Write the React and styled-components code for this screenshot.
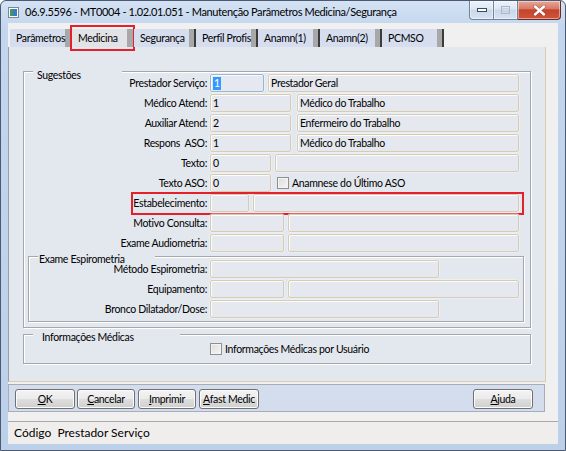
import React from "react";
import styled, { createGlobalStyle } from "styled-components";

const GlobalStyle = createGlobalStyle`
  html, body {
    margin: 0;
    padding: 0;
    background: #ffffff;
  }
  body {
    font-family: Lato, "Liberation Sans", sans-serif;
    color: #000;
  }
`;

// small dialog text, narrow like the old MS Sans Serif
const smallText = `
  font-size: 10.5px;
  letter-spacing: -0.32px;
`;

const Window = styled.div`
  box-sizing: border-box;
  width: 566px;
  height: 451px;
  display: flex;
  flex-direction: column;
  border: 1px solid #4a5a72;
  border-radius: 6px 6px 0 0;
  background: linear-gradient(180deg, #d4e2f3 0%, #c3d6ee 6%, #bcd0ea 100%);
  overflow: hidden;
`;

const TitleBar = styled.div`
  flex: none;
  height: 22px;
  display: flex;
  align-items: flex-start;
  padding-left: 7px;
`;

const AppIcon = styled.svg`
  margin-top: 6px;
  flex: none;
`;

const Title = styled.div`
  margin-left: 6px;
  font-size: 11px;
  letter-spacing: -0.38px;
  line-height: 22px;
  white-space: nowrap;
`;

const Controls = styled.div`
  display: flex;
  margin-left: auto;
  margin-right: 4px;
`;

const CaptionButton = styled.div`
  box-sizing: border-box;
  width: ${(p) => p.$w}px;
  height: 19px;
  display: flex;
  align-items: center;
  justify-content: center;
  border: 1px solid ${(p) => (p.$close ? "#6b2c22" : "#70829c")};
  border-top: none;
  border-left-width: ${(p) => (p.$first ? 1 : 0)}px;
  border-radius: ${(p) => p.$radius};
  background: ${(p) =>
    p.$close
      ? "linear-gradient(180deg, #e8a89a 0%, #d87a66 42%, #c4432c 50%, #cf553b 100%)"
      : "linear-gradient(180deg, #eef3fa 0%, #dde6f2 45%, #c9d7ea 50%, #d8e3f1 100%)"};
  box-shadow: inset 0 0 0 1px rgba(255, 255, 255, 0.45);
`;

const Client = styled.div`
  flex: 1;
  min-height: 0;
  margin: 0 7px 6px;
  background: #f0f0f0;
  display: flex;
  flex-direction: column;
`;

const TabStrip = styled.div`
  display: flex;
  padding: 6px 0 0 2px;
`;

const Tab = styled.div`
  position: relative;
  box-sizing: border-box;
  width: 62px;
  height: 18px;
  padding-left: 6px;
  ${smallText}
  line-height: 18px;
  white-space: nowrap;
  background: linear-gradient(
    90deg,
    ${(p) => (p.$active ? "#e2e3e6" : "#d5ddee")} calc(100% - 7px),
    #a8a8a8 calc(100% - 7px),
    #a8a8a8 calc(100% - 2px),
    ${(p) => (p.$active ? "#a8a8a8" : "#3c3c3c")} calc(100% - 2px)
  );
`;

const Marker = styled.span`
  position: absolute;
  box-sizing: border-box;
  border: 2px solid #e4202a;
  pointer-events: none;
`;

const TabMarker = styled(Marker)`
  top: -4px;
  bottom: -4px;
  left: -2px;
  right: -1px;
`;

const RowMarker = styled(Marker)`
  top: -2px;
  bottom: -3px;
  left: 107px;
  right: 6px;
`;

const Panel = styled.div`
  box-sizing: border-box;
  height: 335px;
  margin-right: 12px;
  padding: 24px 0 0 14px;
  background: #e3e7ee;
  border-left: 1px solid #9aa0a8;
  border-right: 1px solid #dacdad;
  border-bottom: 1px solid #dacdad;
`;

const Group = styled.div`
  position: relative;
  box-sizing: border-box;
  width: ${(p) => p.$w}px;
  border: 1px solid #a4a7ab;
  box-shadow: 1px 1px 0 #ffffff, inset 1px 1px 0 #ffffff;
  padding: ${(p) => p.$pad};
  margin: ${(p) => p.$margin || 0};
`;

const Legend = styled.span`
  position: absolute;
  top: ${(p) => p.$top}px;
  left: 9px;
  box-sizing: border-box;
  width: ${(p) => p.$w}px;
  padding-left: ${(p) => p.$indent}px;
  background: #e3e7ee;
  ${smallText}
  line-height: 13px;
  white-space: nowrap;
`;

const Row = styled.div`
  position: relative;
  display: flex;
  align-items: center;
  height: 18px;
  margin-bottom: 2px;
`;

const Label = styled.span`
  flex: none;
  width: ${(p) => p.$w}px;
  margin-right: 3px;
  text-align: right;
  ${smallText}
  white-space: pre;
`;

const Field = styled.div`
  flex: none;
  box-sizing: border-box;
  width: ${(p) => p.$w}px;
  height: 18px;
  margin-left: ${(p) => p.$gap || 0}px;
  padding-left: 2px;
  display: flex;
  align-items: center;
  ${smallText}
  white-space: nowrap;
  overflow: hidden;
  background: #e5e8ee;
  border: 1px solid ${(p) => (p.$focus ? "#9db4d2" : "#d5ccb3")};
  border-radius: 2px;
  box-shadow: inset 1px 1px 0 #fbfbfb, 0 0 0 0.5px rgba(255, 255, 255, 0.6);
`;

const Selected = styled.span`
  background: #3399ff;
  color: #ffffff;
  padding: 0 1px;
  line-height: 13px;
`;

const Check = styled.label`
  display: flex;
  align-items: center;
  margin-left: ${(p) => p.$gap || 0}px;
  ${smallText}
  white-space: nowrap;
`;

const Box = styled.span`
  box-sizing: border-box;
  width: 12px;
  height: 12px;
  margin-right: 3px;
  border: 1px solid #8e8f8f;
  background: linear-gradient(135deg, #dcdcdc 0%, #f6f6f6 100%);
  box-shadow: inset 0 0 0 1px #f4f4f4;
`;

const CheckRow = styled.div`
  display: flex;
  align-items: center;
  height: 28px;
  padding-left: 186px;
`;

const ButtonBar = styled.div`
  box-sizing: border-box;
  height: 28px;
  margin: 2px 13px 0 0;
  padding: 4px 11px 0 6px;
  display: flex;
  align-items: flex-start;
  background: #d4ddee;
  border: 1px solid #a6adb7;
`;

const Button = styled.button`
  box-sizing: border-box;
  width: ${(p) => p.$w}px;
  height: 20px;
  margin: 0 ${(p) => p.$space || 0}px 0 0;
  margin-left: ${(p) => (p.$push ? "auto" : "0")};
  padding: 0;
  font-family: inherit;
  ${smallText}
  color: #000;
  border: 1px solid #707070;
  border-radius: 3px;
  background: linear-gradient(180deg, #f3f3f3 0%, #ebebeb 48%, #dedede 52%, #cfcfcf 100%);
  box-shadow: inset 0 0 0 1px #fbfbfb;
  u {
    text-decoration: underline;
  }
`;

const Spacer = styled.div`
  flex: 1;
`;

const StatusBar = styled.div`
  height: 22px;
  padding-left: 6px;
  border-top: 1px solid #a9a9a9;
  background: #f0eeec;
  font-size: 12px;
  line-height: 22px;
  white-space: pre;
`;

const suggestions = [
  {
    label: "Prestador Serviço:",
    fields: [{ w: 54, value: "1", focus: true }, { w: 251, gap: 4, value: "Prestador Geral" }],
  },
  {
    label: "Médico Atend:",
    fields: [{ w: 81, value: "1" }, { w: 222, gap: 6, value: "Médico do Trabalho" }],
  },
  {
    label: "Auxiliar Atend:",
    fields: [{ w: 81, value: "2" }, { w: 222, gap: 6, value: "Enfermeiro do Trabalho" }],
  },
  {
    label: "Respons  ASO:",
    fields: [{ w: 81, value: "1" }, { w: 222, gap: 6, value: "Médico do Trabalho" }],
  },
  { label: "Texto:", fields: [{ w: 61, value: "0" }, { w: 244, gap: 4 }] },
  { label: "Texto ASO:", fields: [{ w: 61, value: "0" }], check: "Anamnese do Último ASO" },
  { label: "Estabelecimento:", fields: [{ w: 39 }, { w: 266, gap: 4 }], marked: true },
  { label: "Motivo Consulta:", fields: [{ w: 74 }, { w: 231, gap: 4 }] },
  { label: "Exame Audiometria:", fields: [{ w: 74 }, { w: 231, gap: 4 }] },
];

const spirometry = [
  { label: "Método Espirometria:", fields: [{ w: 229 }] },
  { label: "Equipamento:", fields: [{ w: 74 }, { w: 231, gap: 4 }] },
  { label: "Bronco Dilatador/Dose:", fields: [{ w: 229 }] },
];

const tabs = ["Parâmetros", "Medicina", "Segurança", "Perfil Profis", "Anamn(1)", "Anamn(2)", "PCMSO"];

const FormRow = ({ row, labelWidth }) => (
  <Row>
    <Label $w={labelWidth}>{row.label}</Label>
    {row.fields.map((f, i) => (
      <Field key={i} $w={f.w} $gap={f.gap} $focus={f.focus}>
        {f.focus ? <Selected>{f.value}</Selected> : f.value}
      </Field>
    ))}
    {row.check && (
      <Check $gap={6}>
        <Box />
        {row.check}
      </Check>
    )}
    {row.marked && <RowMarker />}
  </Row>
);

const Mnemonic = ({ text }) => (
  <>
    <u>{text[0]}</u>
    {text.slice(1)}
  </>
);

export default function App() {
  return (
    <>
      <GlobalStyle />
      <Window>
        <TitleBar>
          <AppIcon width="11" height="11" viewBox="0 0 11 11">
            <rect x="0.5" y="0.5" width="10" height="10" fill="#ffffff" stroke="#7b8796" />
            <rect x="2" y="2" width="3" height="7" fill="#3f9a58" />
            <rect x="5" y="2" width="4" height="7" fill="#3c78c8" />
          </AppIcon>
          <Title>06.9.5596 - MT0004 - 1.02.01.051 - Manutenção Parâmetros Medicina/Segurança</Title>
          <Controls>
            <CaptionButton $w={25} $first $radius="0 0 0 4px">
              <svg width="10" height="4" viewBox="0 0 10 4">
                <rect x="0.5" y="0.5" width="9" height="3" fill="#ffffff" stroke="#3b4a5f" />
              </svg>
            </CaptionButton>
            <CaptionButton $w={24} $radius="0">
              <svg width="9" height="8" viewBox="0 0 9 8">
                <rect x="0.5" y="0.5" width="8" height="7" fill="none" stroke="#a9b7c9" />
                <rect x="2" y="2.5" width="5" height="3" fill="none" stroke="#c6d1df" />
              </svg>
            </CaptionButton>
            <CaptionButton $w={43} $close $radius="0 0 4px 0">
              <svg width="13" height="11" viewBox="0 0 13 11">
                <path d="M2 1.5 L11 9.5 M11 1.5 L2 9.5" stroke="#5a1d14" strokeWidth="3.4" strokeLinecap="round" opacity="0.5" />
                <path d="M2 1.5 L11 9.5 M11 1.5 L2 9.5" stroke="#ffffff" strokeWidth="2.4" strokeLinecap="round" />
              </svg>
            </CaptionButton>
          </Controls>
        </TitleBar>

        <Client>
          <TabStrip>
            {tabs.map((t) => (
              <Tab key={t} $active={t === "Medicina"}>
                {t}
                {t === "Medicina" && <TabMarker />}
              </Tab>
            ))}
          </TabStrip>

          <Panel>
            <Group $w={508} $pad="2px 0 5px 0">
              <Legend $top={-3} $w={89} $indent={4}>
                Sugestões
              </Legend>
              {suggestions.map((r) => (
                <FormRow key={r.label} row={r} labelWidth={183} />
              ))}
              <Group $w={496} $pad="3px 0 1px 0" $margin="4px 0 0 4px">
                <Legend $top={-4} $w={117} $indent={1}>
                  Exame Espirometria
                </Legend>
                {spirometry.map((r) => (
                  <FormRow key={r.label} row={r} labelWidth={178} />
                ))}
              </Group>
            </Group>

            <Group $w={508} $pad="0" $margin="6px 0 0 0">
              <Legend $top={-4} $w={147} $indent={9}>
                Informações Médicas
              </Legend>
              <CheckRow>
                <Check>
                  <Box />
                  Informações Médicas por Usuário
                </Check>
              </CheckRow>
            </Group>
          </Panel>

          <ButtonBar>
            <Button $w={60} $space={2}>
              <Mnemonic text="OK" />
            </Button>
            <Button $w={58} $space={3}>
              <Mnemonic text="Cancelar" />
            </Button>
            <Button $w={58} $space={3}>
              <Mnemonic text="Imprimir" />
            </Button>
            <Button $w={60}>
              <Mnemonic text="Afast Medic" />
            </Button>
            <Button $w={60} $push>
              <Mnemonic text="Ajuda" />
            </Button>
          </ButtonBar>

          <Spacer />
          <StatusBar>Código  Prestador Serviço</StatusBar>
        </Client>
      </Window>
    </>
  );
}
